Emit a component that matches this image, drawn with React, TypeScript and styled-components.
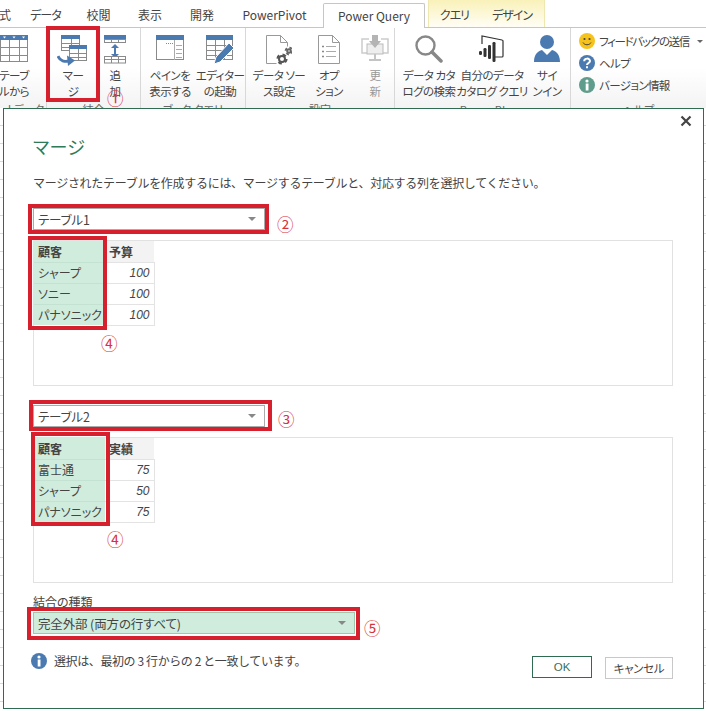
import React from "react";
import styled, { createGlobalStyle } from "styled-components";

const Global = createGlobalStyle`
  html, body { margin: 0; padding: 0; background: #fff; }
  body { font-family: "Noto Sans CJK JP", "Liberation Sans", sans-serif; }
  * { box-sizing: border-box; }
  svg { flex: none; display: block; }
`;

const Page = styled.div`
  width: 706px; height: 711px; overflow: hidden; display: flex; flex-direction: column;
  color: #444; font-feature-settings: "palt";
`;

/* ---------- ribbon ---------- */
const RibbonArea = styled.header`height: 108px; overflow: hidden; flex: none; display: flex; flex-direction: column;`;
const TabBar = styled.nav`
  height: 28px; flex: none; display: flex; border-bottom: 1px solid #c6c6c6; background: #fff; margin-left: -8px;
`;
const Tab = styled.div<{ $w: number; $tight?: boolean }>`
  width: ${p => p.$w}px; height: 27px; flex: none; text-align: center; font-size: 12px; line-height: 29px; color: #444;
  ${p => (p.$tight ? "letter-spacing: -1px;" : "")}
`;
const ActiveTab = styled(Tab)`
  height: 28px; margin: 3px 2px 0 2px; line-height: 24px; background: #fff;
  border: 1px solid #c6c6c6; border-bottom: none; border-radius: 2px 2px 0 0; color: #444;
`;
const ContextTabs = styled.div`
  display: flex; margin-left: 1px; height: 27px;
  background: linear-gradient(#f9f1b9, #fffef6);
  border-left: 1px solid #efe7b0; border-right: 1px solid #efe7b0;
`;
const Groups = styled.div`
  flex: 1; display: flex; background: linear-gradient(#fff 45%, #f1f1f1);
`;
const Group = styled.section<{ $w: number; $last?: boolean }>`
  width: ${p => p.$w}px; flex: none; position: relative; display: flex; flex-direction: column;
  ${p => (p.$last ? "" : "border-right: 1px solid #d8d8d8;")}
`;
const Buttons = styled.div<{ $pl?: number }>`
  height: 74px; flex: none; display: flex; padding-left: ${p => p.$pl ?? 0}px;
`;
const GroupLabel = styled.div`
  text-align: center; font-size: 11px; line-height: 14px; color: #666; white-space: nowrap;
`;
const RButton = styled.div<{ $w: number; $ml?: number }>`
  width: ${p => p.$w}px; margin-left: ${p => p.$ml ?? 0}px; flex: none; position: relative;
  display: flex; flex-direction: column; align-items: center; padding-top: 7px;
`;
const IconSlot = styled.div`
  height: 32px; flex: none; display: flex; align-items: flex-start; justify-content: center;
`;
const RLabel = styled.div<{ $dim?: boolean }>`
  font-size: 11.5px; line-height: 16px; text-align: center; white-space: pre; letter-spacing: -0.5px;
  color: ${p => (p.$dim ? "#999" : "#444")};
`;
const HelpList = styled.div`
  display: flex; flex-direction: column; gap: 6px; padding: 5px 0 0 8px; height: 74px;
`;
const HelpRow = styled.div<{ $tight?: boolean }>`
  display: flex; align-items: center; gap: 4px; height: 16px; font-size: 11.5px; color: #444; white-space: nowrap;
  letter-spacing: ${p => (p.$tight ? "-1.3px" : "-0.6px")};
`;
const Caret = styled.span`
  width: 0; height: 0; margin-left: 4px; border: 3px solid transparent; border-top: 3px solid #666; border-bottom: 0;
`;

/* ---------- annotations ---------- */
const RedFrame = styled.div<{ $l: number; $t: number; $w: number; $h: number }>`
  position: absolute; left: ${p => p.$l}px; top: ${p => p.$t}px; width: ${p => p.$w}px; height: ${p => p.$h}px;
  border: 4px solid #d6202e; pointer-events: none;
`;
const Mark = styled.span<{ $l: number; $t: number }>`
  position: absolute; left: ${p => p.$l}px; top: ${p => p.$t}px; width: 16px; height: 16px;
  font-size: 16.5px; line-height: 16px; text-align: center; color: #d8323c; font-family: "Noto Sans CJK JP", sans-serif;
`;

/* ---------- sheet + dialog ---------- */
const Sheet = styled.main`
  flex: 1; display: flex; padding: 0 2px 2px 3px; background: #fff repeating-linear-gradient(#fff 0, #fff 17px, #d8d8d8 17px, #d8d8d8 18px);
`;
const Dialog = styled.div`
  flex: 1; position: relative; background: #fff; border: 1px solid #2f6b50; padding: 24px 30px 0 29px;
  display: flex; flex-direction: column;
`;
const Close = styled.div`
  position: absolute; right: 10px; top: 5px; width: 14px; height: 14px; color: #444;
`;
const Title = styled.h1`
  margin: 0; font-size: 18px; line-height: 26px; font-weight: 400; color: #2f7a58; letter-spacing: 0.4px;
`;
const Desc = styled.p`
  margin: 16px 0 0; font-size: 12px; line-height: 16px; color: #444; font-feature-settings: normal; letter-spacing: -0.29px;
`;
const Select = styled.div<{ $w: number; $mt: number; $green?: boolean }>`
  position: relative; width: ${p => p.$w}px; height: 22px; margin-top: ${p => p.$mt}px; flex: none;
  display: flex; align-items: center; padding: 0 8px 0 4px; font-size: 12.5px; letter-spacing: -0.15px; color: #444;
  border: 1px solid ${p => (p.$green ? "#9fc7ae" : "#ababab")};
  background: ${p => (p.$green ? "#d0ecdd" : "#fff")};
`;
const SelectText = styled.span`flex: 1;`;
const Arrow = styled.span`
  width: 0; height: 0; border-left: 4px solid transparent; border-right: 4px solid transparent; border-top: 4px solid #888;
`;
const Preview = styled.div`
  height: 146px; margin-top: 10px; flex: none; border: 1px solid #e1e1e1; background: #fff;
`;
const TableWrap = styled.div`position: relative; width: 120px; height: 84px;`;
const DataTable = styled.table`
  border-collapse: collapse; table-layout: fixed; width: 120px; font-size: 12px; color: #444;
`;
const HeadCell = styled.th<{ $key?: boolean }>`
  height: 21px; padding: 0 4px; text-align: left; font-weight: 700; font-size: 12px;
  background: ${p => (p.$key ? "#d0ecdd" : "#f3f3f3")};
`;
const NameCell = styled.td`
  height: 21px; width: 71px; padding: 0 0 0 4px; background: #d0ecdd; border-top: 1px solid #c4e2d2; white-space: nowrap;
`;
const NumCell = styled.td`
  height: 21px; padding: 0 4px; text-align: right; font-style: italic; font-family: "Liberation Sans", sans-serif; font-size: 12px;
  border: 1px solid #e3e3e3; border-left: none;
`;
const FieldLabel = styled.div`
  margin-top: 11px; font-size: 12px; line-height: 15px; color: #444;
`;
const Footer = styled.div`
  margin-top: 19px; display: flex; align-items: flex-start;
`;
const InfoText = styled.div`
  display: flex; align-items: center; gap: 7px; margin-left: -2px; font-size: 12px; line-height: 16px; color: #444; flex: 1; font-feature-settings: normal; letter-spacing: -0.4px;
`;
const OkButton = styled.div`
  width: 60px; height: 22px; margin-top: 3px; border: 1px solid #2f6b50; display: flex; align-items: center; justify-content: center;
  font-size: 11.5px; color: #3f6f5a; font-family: "Liberation Sans", sans-serif;
`;
const CancelButton = styled.div`
  width: 68px; height: 22px; margin: 4px 0 0 13px; border: 1px solid #c8c8c8; display: flex; align-items: center; justify-content: center;
  font-size: 11.5px; letter-spacing: -0.3px; color: #444;
`;

/* ---------- icons ---------- */
const B = "#4a7ab0", G = "#8a8a8a";
const Grid = ({ x, y, w, h, rows, cols, head = 4 }: { x: number; y: number; w: number; h: number; rows: number; cols: number; head?: number }) => (
  <g>
    <rect x={x + 0.5} y={y + 0.5} width={w - 1} height={h - 1} fill="#fff" stroke={G} />
    {Array.from({ length: rows - 1 }, (_, i) => {
      const yy = Math.round(y + head + ((i + 1) * (h - head)) / rows) + 0.5;
      return <line key={"r" + i} x1={x} x2={x + w} y1={yy} y2={yy} stroke={G} />;
    })}
    {Array.from({ length: cols - 1 }, (_, i) => {
      const xx = Math.round(x + ((i + 1) * w) / cols) + 0.5;
      return <line key={"c" + i} x1={xx} x2={xx} y1={y} y2={y + h} stroke={G} />;
    })}
    <rect x={x} y={y} width={w} height={head} fill={B} />
  </g>
);
const TableIcon = () => (
  <svg width="28" height="28" viewBox="0 0 28 28">
    <Grid x={0} y={0} w={28} h={27} rows={3} cols={3} head={5} />
    <path d="M3 1.500h3l-1.500 2zM12.500 1.500h3l-1.500 2zM22 1.500h3l-1.500 2z" fill="#fff" />
  </svg>
);
const MergeIcon = () => (
  <svg width="32" height="32" viewBox="0 0 32 32">
    <Grid x={4} y={0} w={19} h={16} rows={3} cols={2} />
    <Grid x={12} y={10} w={18} h={16} rows={3} cols={2} />
    <path d="M1 21c2 5 7 6 11 5" fill="none" stroke={B} strokeWidth="3" />
    <path d="M10 20.500l8 5-7 5.500z" fill={B} />
  </svg>
);
const AppendIcon = () => (
  <svg width="24" height="30" viewBox="0 0 24 30">
    <rect x="1" y="0" width="22" height="4" fill={B} />
    <rect x="1.500" y="4.500" width="21" height="3" fill="#fff" stroke={G} />
    <path d="M8.500 4v4M15.500 4v4" stroke={G} />
    <path d="M12 9l-4 4h3v6H8l4 4 4-4h-3v-6h3z" fill={B} />
    <rect x="1.500" y="21.500" width="21" height="3" fill="#fff" stroke={G} />
    <rect x="1.500" y="24.500" width="21" height="3.500" fill="#fff" stroke={G} />
    <path d="M8.500 21v7M15.500 21v7" stroke={G} />
  </svg>
);
const PaneIcon = () => (
  <svg width="28" height="26" viewBox="0 0 28 26">
    <rect x=".5" y=".5" width="27" height="24" fill="#fff" stroke={G} />
    <rect width="28" height="5" fill={B} />
    <path d="M18.500 5v20M20 10.500h6M20 14.500h6M20 18.500h6M20 22.500h6" stroke="#aaa" />
    <path d="M10 8.500h1M12 8.500h1M14 8.500h1M16 8.500h1" stroke="#888" />
  </svg>
);
const EditorIcon = () => (
  <svg width="28" height="30" viewBox="0 0 28 30">
    <Grid x={0} y={0} w={27} h={25} rows={4} cols={3} head={5} />
    <path d="M8 29l2-7L23 8l5 5-14 14z" fill={B} stroke="#fff" />
  </svg>
);
const Gear = ({ cx, cy, r, c }: { cx: number; cy: number; r: number; c: string }) => (
  <g>
    <circle cx={cx} cy={cy} r={r + 1} fill="none" stroke={c} strokeWidth="2" strokeDasharray={`${(r + 1) * 0.8} ${(r + 1) * 0.77}`} />
    <circle cx={cx} cy={cy} r={r - 0.6} fill="#fff" stroke={c} strokeWidth="2" />
  </g>
);
const SourceIcon = () => (
  <svg width="26" height="30" viewBox="0 0 26 30">
    <path d="M.5.500h14l7 7v4M.5.500V28.500h10M14.500.500v7h7" fill="none" stroke="#999" />
    <Gear cx={16} cy={24} r={3.6} c="#555" />
    <Gear cx={23} cy={16} r={2.4} c="#666" />
  </svg>
);
const OptionsIcon = () => (
  <svg width="22" height="29" viewBox="0 0 22 29">
    <path d="M.5.500h14l7 7v21H.5zM14.500.500v7h7" fill="#fff" stroke="#999" />
    <path d="M4 11.500h2M4 16.500h2M4 21.500h2" stroke="#888" strokeWidth="1.500" />
    <path d="M8 11.500h10M8 16.500h10M8 21.500h10" stroke="#aaa" />
  </svg>
);
const RefreshIcon = () => (
  <svg width="28" height="28" viewBox="0 0 28 28">
    <path d="M8 4H1v14h26V4h-7" fill="none" stroke="#ccc" strokeWidth="1.500" />
    <rect x="6" y="9" width="16" height="10" fill="#eee" stroke="#bbb" />
    <path d="M11 0h6v6h3l-6 7-6-7h3z" fill="#b4b4b4" />
    <path d="M14 19v5M8 25h12" stroke="#c4c4c4" strokeWidth="2" />
  </svg>
);
const SearchIcon = () => (
  <svg width="28" height="28" viewBox="0 0 28 28">
    <circle cx="10.500" cy="10.500" r="9" fill="#fff" stroke="#888" strokeWidth="2.400" />
    <path d="M17 17l9 9" stroke="#888" strokeWidth="3.500" strokeLinecap="round" />
  </svg>
);
const PowerBIIcon = () => (
  <svg width="26" height="28" viewBox="0 0 26 28">
    <path d="M3 9V1l20 4q1 0 1 1v15q0 1-1 1h-7" fill="none" stroke="#333" strokeWidth="1.200" />
    <rect x="0" y="16" width="3" height="4" rx="1.200" fill="#333" />
    <rect x="4.500" y="13" width="3" height="9" rx="1.200" fill="#333" />
    <rect x="9" y="10" width="3" height="14" rx="1.200" fill="#333" />
    <rect x="13.500" y="7" width="3" height="20" rx="1.200" fill="#333" />
  </svg>
);
const UserIcon = () => (
  <svg width="26" height="28" viewBox="0 0 26 28">
    <circle cx="13" cy="7" r="7" fill={B} />
    <path d="M0 27c0-8 4-11 8-12l5 5 5-5c4 1 8 4 8 12z" fill={B} />
  </svg>
);
const Smiley = () => (
  <svg width="16" height="16" viewBox="0 0 16 16">
    <circle cx="8" cy="8" r="8" fill="#f6c21c" />
    <circle cx="5.500" cy="6" r="1.100" fill="#444" /><circle cx="10.500" cy="6" r="1.100" fill="#444" />
    <path d="M4 9.500c1.500 3 6.500 3 8 0" fill="none" stroke="#444" />
  </svg>
);
const Round = ({ fill, ch }: { fill: string; ch: "q" | "i" }) => (
  <svg width="16" height="16" viewBox="0 0 16 16">
    <circle cx="8" cy="8" r="8" fill={fill} />
    {ch === "q" ? (
      <g fill="none" stroke="#fff" strokeWidth="2"><path d="M5.200 6.200c0-3.400 5.800-3.400 5.800-.2 0 2-3 2-3 4" /><path d="M8 11.300v2" /></g>
    ) : (
      <g fill="#fff"><rect x="6.700" y="6.500" width="2.800" height="7" /><circle cx="8" cy="4" r="1.600" /></g>
    )}
  </svg>
);
const XIcon = () => (
  <svg width="14" height="14" viewBox="0 0 14 14"><path d="M2.500 2.500l9 9M11.500 2.500l-9 9" stroke="#444" strokeWidth="2.200" /></svg>
);

type Row = [string, number];
const Table = ({ head, rows, frame, mark }: { head: string; rows: Row[]; frame: { l: number; t: number }; mark: { l: number; t: number } }) => (
  <TableWrap>
    <DataTable>
      <colgroup><col width="71" /><col width="49" /></colgroup>
      <thead><tr><HeadCell $key>顧客</HeadCell><HeadCell>{head}</HeadCell></tr></thead>
      <tbody>
        {rows.map(([n, v]) => (
          <tr key={n}><NameCell>{n}</NameCell><NumCell>{v}</NumCell></tr>
        ))}
      </tbody>
    </DataTable>
    <RedFrame $l={frame.l} $t={frame.t} $w={79} $h={94} />
    <Mark $l={mark.l} $t={mark.t}>④</Mark>
  </TableWrap>
);

export default function App() {
  return (
    <Page>
      <Global />
      <RibbonArea>
        <TabBar>
          <Tab $w={26}>式</Tab>
          <Tab $w={55} $tight>データ</Tab>
          <Tab $w={51}>校閲</Tab>
          <Tab $w={52}>表示</Tab>
          <Tab $w={52}>開発</Tab>
          <Tab $w={93}>PowerPivot</Tab>
          <ActiveTab $w={102}>Power Query</ActiveTab>
          <ContextTabs>
            <Tab $w={51} $tight>クエリ</Tab>
            <Tab $w={64} $tight>デザイン</Tab>
          </ContextTabs>
        </TabBar>
        <Groups>
          <Group $w={47}>
            <Buttons>
              <RButton $w={28}><IconSlot><TableIcon /></IconSlot><RLabel>{"テーブ\nルから"}</RLabel></RButton>
            </Buttons>
            <GroupLabel>el データ</GroupLabel>
          </Group>
          <Group $w={94}>
            <Buttons>
              <RButton $w={52}><IconSlot><MergeIcon /></IconSlot><RLabel>{"マー\nジ"}</RLabel></RButton>
              <RButton $w={32}>
                <IconSlot><AppendIcon /></IconSlot><RLabel>{"追\n加"}</RLabel>
              </RButton>
            </Buttons>
            <GroupLabel>結合</GroupLabel>
            <RedFrame $l={-1} $t={-2} $w={54} $h={76} />
            <Mark $l={60} $t={62}>①</Mark>
          </Group>
          <Group $w={105}>
            <Buttons $pl={4}>
              <RButton $w={50}><IconSlot><PaneIcon /></IconSlot><RLabel>{"ペインを\n表示する"}</RLabel></RButton>
              <RButton $w={50}><IconSlot><EditorIcon /></IconSlot><RLabel>{"エディター\nの起動"}</RLabel></RButton>
            </Buttons>
            <GroupLabel>ブック クエリ</GroupLabel>
          </Group>
          <Group $w={149}>
            <Buttons $pl={4}>
              <RButton $w={58}><IconSlot><SourceIcon /></IconSlot><RLabel>{"データ ソー\nス設定"}</RLabel></RButton>
              <RButton $w={40} $ml={1}><IconSlot><OptionsIcon /></IconSlot><RLabel>{"オプ\nション"}</RLabel></RButton>
              <RButton $w={32} $ml={10}><IconSlot><RefreshIcon /></IconSlot><RLabel $dim>{"更\n新"}</RLabel></RButton>
            </Buttons>
            <GroupLabel>設定</GroupLabel>
          </Group>
          <Group $w={176}>
            <Buttons $pl={6}>
              <RButton $w={56}><IconSlot><SearchIcon /></IconSlot><RLabel>{"データ カタ\nログの検索"}</RLabel></RButton>
              <RButton $w={66} $ml={2}><IconSlot><PowerBIIcon /></IconSlot><RLabel>{"自分のデータ\nカタログ クエリ"}</RLabel></RButton>
              <RButton $w={40} $ml={2}><IconSlot><UserIcon /></IconSlot><RLabel>{"サイ\nンイン"}</RLabel></RButton>
            </Buttons>
            <GroupLabel>Power BI</GroupLabel>
          </Group>
          <Group $w={135} $last>
            <HelpList>
              <HelpRow $tight><Smiley />フィードバックの送信<Caret /></HelpRow>
              <HelpRow><Round fill={B} ch="q" />ヘルプ</HelpRow>
              <HelpRow><Round fill="#5f9c8c" ch="i" />バージョン情報</HelpRow>
            </HelpList>
            <GroupLabel>ヘルプ</GroupLabel>
          </Group>
        </Groups>
      </RibbonArea>
      <Sheet>
        <Dialog>
          <Close><XIcon /></Close>
          <Title>マージ</Title>
          <Desc>マージされたテーブルを作成するには、マージするテーブルと、対応する列を選択してください。</Desc>
          <Select $w={232} $mt={17}>
            <SelectText>テーブル1</SelectText><Arrow />
            <RedFrame $l={-6} $t={-5} $w={241} $h={30} />
            <Mark $l={243} $t={7}>②</Mark>
          </Select>
          <Preview>
            <Table head="予算" rows={[["シャープ", 100], ["ソニー", 100], ["パナソニック", 100]]} frame={{ l: -6, t: -5 }} mark={{ l: 67, t: 94 }} />
          </Preview>
          <Select $w={232} $mt={19}>
            <SelectText>テーブル2</SelectText><Arrow />
            <RedFrame $l={-5} $t={-6} $w={243} $h={31} />
            <Mark $l={244} $t={5}>③</Mark>
          </Select>
          <Preview>
            <Table head="実績" rows={[["富士通", 75], ["シャープ", 50], ["パナソニック", 75]]} frame={{ l: -3, t: -6 }} mark={{ l: 73, t: 93 }} />
          </Preview>
          <FieldLabel>結合の種類</FieldLabel>
          <Select $w={322} $mt={3} $green>
            <SelectText>完全外部 (両方の行すべて)</SelectText><Arrow />
            <RedFrame $l={-7} $t={-6} $w={333} $h={33} />
            <Mark $l={330} $t={7}>⑤</Mark>
          </Select>
          <Footer>
            <InfoText><Round fill={B} ch="i" />選択は、最初の 3 行からの 2 と一致しています。</InfoText>
            <OkButton>OK</OkButton>
            <CancelButton>キャンセル</CancelButton>
          </Footer>
        </Dialog>
      </Sheet>
    </Page>
  );
}
